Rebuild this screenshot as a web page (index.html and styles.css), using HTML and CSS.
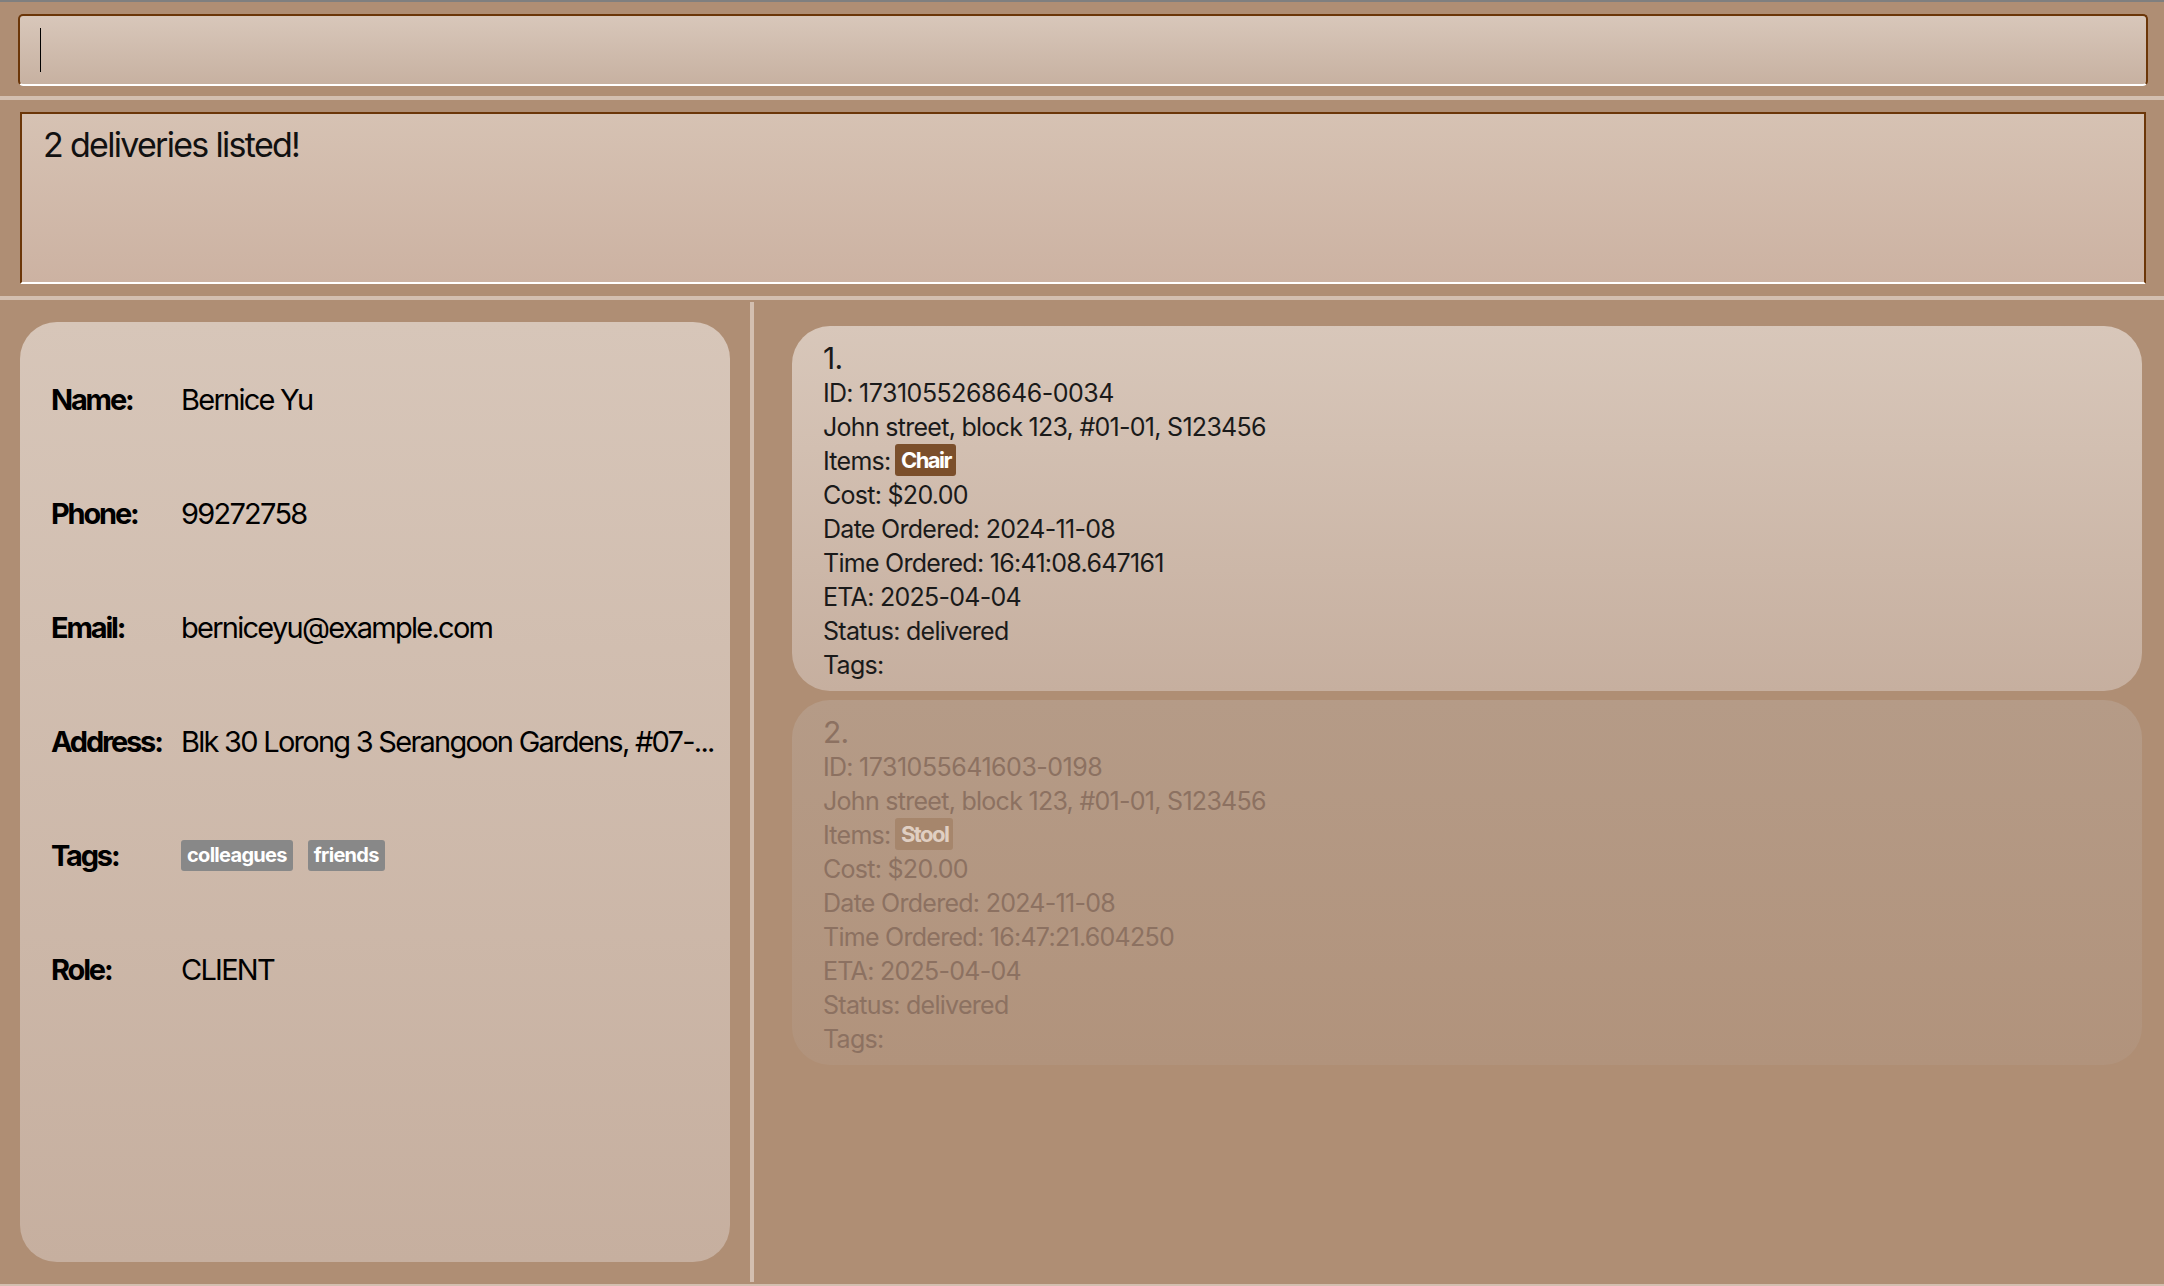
FILE: index.html
```html
<!DOCTYPE html>
<html lang="en">
<head>
<meta charset="utf-8">
<title>Deliveries</title>
<link rel="stylesheet" href="styles.css">
</head>
<body>
<div class="app">
  <div class="topline"></div>
  <div class="cmd-wrap">
    <div class="cmd"><span class="caret"></span></div>
  </div>
  <div class="sep"></div>
  <div class="result-wrap">
    <div class="result">2 deliveries listed!</div>
  </div>
  <div class="sep"></div>
  <div class="main">
    <div class="left">
      <div class="client-card">
        <div class="label">Name:</div><div class="value">Bernice Yu</div>
        <div class="label">Phone:</div><div class="value">99272758</div>
        <div class="label">Email:</div><div class="value">berniceyu@example.com</div>
        <div class="label">Address:</div><div class="value">Blk 30 Lorong 3 Serangoon Gardens, #07-...</div>
        <div class="label">Tags:</div><div class="value"><span class="tag">colleagues</span><span class="tag">friends</span></div>
        <div class="label">Role:</div><div class="value">CLIENT</div>
      </div>
    </div>
    <div class="divider"></div>
    <div class="right">
      <div class="dcard">
        <div class="num">1.</div>
        <div class="line">ID: <span class="digits">1731055268646-0034</span></div>
        <div class="line">John street, block 123, #01-01, S123456</div>
        <div class="line">Items: <span class="item">Chair</span></div>
        <div class="line">Cost: $20.00</div>
        <div class="line">Date Ordered: 2024-11-08</div>
        <div class="line">Time Ordered: 16:41:08.647161</div>
        <div class="line">ETA: 2025-04-04</div>
        <div class="line">Status: delivered</div>
        <div class="line">Tags:</div>
      </div>
      <div class="dcard faded">
        <div class="num">2.</div>
        <div class="line">ID: <span class="digits">1731055641603-0198</span></div>
        <div class="line">John street, block 123, #01-01, S123456</div>
        <div class="line">Items: <span class="item">Stool</span></div>
        <div class="line">Cost: $20.00</div>
        <div class="line">Date Ordered: 2024-11-08</div>
        <div class="line">Time Ordered: 16:47:21.604250</div>
        <div class="line">ETA: 2025-04-04</div>
        <div class="line">Status: delivered</div>
        <div class="line">Tags:</div>
      </div>
    </div>
  </div>
  <div class="bottomline"></div>
</div>
</body>
</html>
```
FILE: styles.css
```css
html, body {
  margin: 0;
  padding: 0;
}
body {
  background: #AF8E74;
  font-family: Inter, "Noto Sans", sans-serif;
  color: #1a1a1a;
  width: 2164px;
  height: 1286px;
  overflow: hidden;
}
.app {
  display: flex;
  flex-direction: column;
  height: 1286px;
}
.topline {
  height: 2px;
  background: #7F7F7F;
}
.cmd-wrap {
  padding: 12px 16px 10px 18px;
}
.cmd {
  box-sizing: border-box;
  height: 72px;
  border: 2px solid #6B3608;
  border-bottom-color: #FFFFFF;
  border-radius: 5px;
  background: linear-gradient(to bottom, #D8C7BA, #C7B1A1);
  padding: 12px 0 0 20px;
}
.caret {
  display: block;
  width: 1px;
  height: 44px;
  background: #000;
}
.sep {
  height: 4px;
  background: #D3BFB0;
}
.result-wrap {
  padding: 12px 18px 12px 20px;
}
.result {
  box-sizing: border-box;
  height: 172px;
  border: 2px solid #6B3608;
  border-bottom-color: #FFFFFF;
  background: linear-gradient(to bottom, #D6C2B3, #CCB2A2);
  padding: 10px 0 0 21px;
  font-size: 34px;
  line-height: 42px;
  letter-spacing: -0.05em;
  color: #111;
}
.main {
  flex: 1;
  display: flex;
  min-height: 0;
}
.left {
  width: 750px;
  box-sizing: border-box;
  padding: 22px 20px 22px 20px;
  display: flex;
}
.client-card {
  flex: 1;
  border-radius: 37px;
  background: linear-gradient(to bottom, #D7C6B9, #C6AF9F);
  padding: 20px 0 0 31px;
  display: grid;
  grid-template-columns: 130px minmax(0, 1fr);
  grid-auto-rows: 114px;
  align-content: start;
  align-items: center;
  font-size: 29px;
  letter-spacing: -0.06em;
  color: #000;
}
.label {
  font-weight: 700;
  letter-spacing: -0.075em;
}
.value {
  white-space: nowrap;
}
.tag {
  display: inline-block;
  vertical-align: middle;
  position: relative;
  top: -2px;
  background: #888888;
  color: #FFFFFF;
  font-weight: 700;
  font-size: 20px;
  height: 31px;
  line-height: 31px;
  padding: 0 6px;
  border-radius: 3px;
  margin-right: 15px;
  letter-spacing: -0.035em;
}
.divider {
  width: 4px;
  margin: 2px 0;
  background: #D3BFB0;
}
.right {
  flex: 1;
  padding: 26px 22px 0 38px;
  display: flex;
  flex-direction: column;
  gap: 9px;
}
.dcard {
  border-radius: 38px;
  background: linear-gradient(to bottom, #D8C7BA, #C6AF9F);
  padding: 14px 20px 9px 31px;
  color: #1a1a1a;
  letter-spacing: -0.045em;
}
.num {
  font-size: 30px;
  line-height: 36px;
}
.line {
  font-size: 25px;
  line-height: 34px;
  white-space: nowrap;
}
.digits {
  letter-spacing: -0.02em;
}
.item {
  display: inline-block;
  vertical-align: top;
  margin-left: -2px;
  background: #7B4F2B;
  color: #FFFFFF;
  font-weight: 700;
  font-size: 22px;
  height: 32px;
  line-height: 32px;
  padding: 0 5px 0 6px;
  border-radius: 3px;
  letter-spacing: -0.07em;
}
.dcard.faded {
  background: linear-gradient(to bottom, #B59B87, #B1937C);
  color: #8C7161;
}
.dcard.faded .item {
  background: #A6866C;
  color: #E0CFC2;
}
.bottomline {
  height: 2px;
  background: #D3BFB0;
}
```
